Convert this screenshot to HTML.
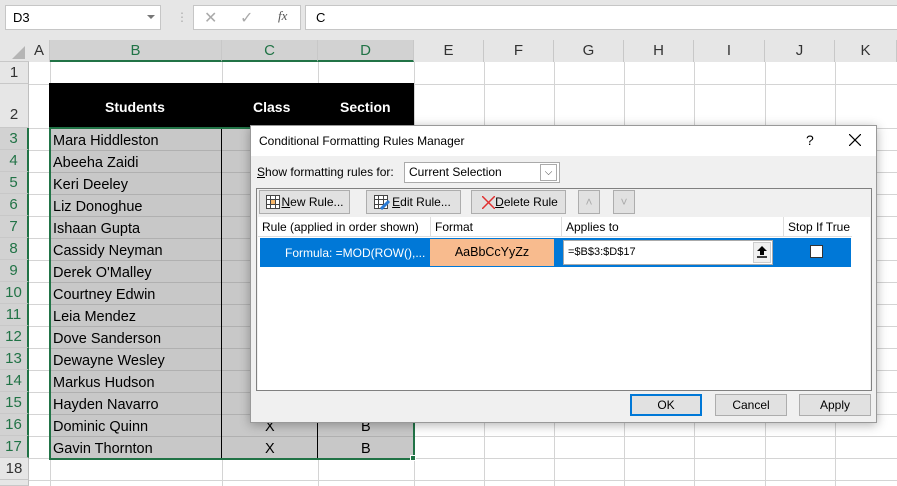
<!DOCTYPE html>
<html><head><style>
*{margin:0;padding:0;box-sizing:border-box}
body{width:897px;height:486px;overflow:hidden;background:#fff;font-family:"Liberation Sans",sans-serif;position:relative}
.a{position:absolute}
.hl{position:absolute;height:1px;background:#d4d4d4}
.vl{position:absolute;width:1px;background:#d4d4d4}
.rh{position:absolute;left:0;width:29px;text-align:center;font-size:15px;color:#333;background:#e6e6e6;border-bottom:1px solid #c8c8c8;border-right:1px solid #bfbfbf}
.rs{background:#d2d2d2;color:#217346;border-right:2px solid #217346}
.ch{position:absolute;top:40px;height:22px;text-align:center;font-size:15px;color:#333;line-height:22px;background:#e6e6e6;border-right:1px solid #c8c8c8}
.cs{background:#d2d2d2;color:#217346;border-bottom:2px solid #217346}
.nm{position:absolute;left:53px;font-size:14.5px;color:#000;line-height:22px;margin-top:2px}
.btn{position:absolute;background:#e1e1e1;border:1px solid #adadad;font-size:12px;color:#000;text-align:center}
</style></head><body>
<div class="a" style="left:0;top:0;width:897px;height:40px;background:#e6e6e6"></div>
<div class="a" style="left:5px;top:5px;width:156px;height:25px;background:#fff;border:1px solid #c6c6c6;font-size:13px;line-height:23px;padding-left:7px">D3</div>
<div class="a" style="left:147px;top:15px;width:0;height:0;border-left:4px solid transparent;border-right:4px solid transparent;border-top:4px solid #777"></div>
<div class="a" style="left:176px;top:10px;color:#aaa;font-size:12px">⋮</div>
<div class="a" style="left:193px;top:5px;width:108px;height:25px;background:#fff;border:1px solid #c6c6c6"></div>
<div class="a" style="left:204px;top:8px;color:#aaa;font-size:16px">✕</div>
<div class="a" style="left:240px;top:8px;color:#aaa;font-size:16px">✓</div>
<div class="a" style="left:278px;top:8px;color:#555;font-size:13px;font-style:italic;font-family:'Liberation Serif',serif">fx</div>
<div class="a" style="left:305px;top:5px;width:600px;height:25px;background:#fff;border:1px solid #c6c6c6;font-size:13px;line-height:23px;padding-left:10px">C</div>
<div class="a" style="left:0;top:40px;width:897px;height:22px;background:#e6e6e6;border-bottom:1px solid #c8c8c8"></div>
<div class="a" style="left:12px;top:46px;width:0;height:0;border-left:13px solid transparent;border-bottom:13px solid #b5b5b5"></div>
<div class="ch" style="left:29px;width:21px">A</div>
<div class="ch cs" style="left:50px;width:172px">B</div>
<div class="ch cs" style="left:222px;width:96px">C</div>
<div class="ch cs" style="left:318px;width:96px">D</div>
<div class="ch" style="left:414px;width:70px">E</div>
<div class="ch" style="left:484px;width:70px">F</div>
<div class="ch" style="left:554px;width:70px">G</div>
<div class="ch" style="left:624px;width:70px">H</div>
<div class="ch" style="left:694px;width:71px">I</div>
<div class="ch" style="left:765px;width:70px">J</div>
<div class="ch" style="left:835px;width:62px">K</div>
<div class="vl" style="left:50px;top:62px;height:424px"></div>
<div class="vl" style="left:222px;top:62px;height:424px"></div>
<div class="vl" style="left:318px;top:62px;height:424px"></div>
<div class="vl" style="left:414px;top:62px;height:424px"></div>
<div class="vl" style="left:484px;top:62px;height:424px"></div>
<div class="vl" style="left:554px;top:62px;height:424px"></div>
<div class="vl" style="left:624px;top:62px;height:424px"></div>
<div class="vl" style="left:694px;top:62px;height:424px"></div>
<div class="vl" style="left:765px;top:62px;height:424px"></div>
<div class="vl" style="left:835px;top:62px;height:424px"></div>
<div class="hl" style="left:29px;top:84px;width:868px"></div>
<div class="hl" style="left:29px;top:128px;width:868px"></div>
<div class="hl" style="left:29px;top:150px;width:868px"></div>
<div class="hl" style="left:29px;top:172px;width:868px"></div>
<div class="hl" style="left:29px;top:194px;width:868px"></div>
<div class="hl" style="left:29px;top:216px;width:868px"></div>
<div class="hl" style="left:29px;top:238px;width:868px"></div>
<div class="hl" style="left:29px;top:260px;width:868px"></div>
<div class="hl" style="left:29px;top:282px;width:868px"></div>
<div class="hl" style="left:29px;top:304px;width:868px"></div>
<div class="hl" style="left:29px;top:326px;width:868px"></div>
<div class="hl" style="left:29px;top:348px;width:868px"></div>
<div class="hl" style="left:29px;top:370px;width:868px"></div>
<div class="hl" style="left:29px;top:392px;width:868px"></div>
<div class="hl" style="left:29px;top:414px;width:868px"></div>
<div class="hl" style="left:29px;top:436px;width:868px"></div>
<div class="hl" style="left:29px;top:458px;width:868px"></div>
<div class="hl" style="left:29px;top:480px;width:868px"></div>
<div class="rh" style="top:62px;height:22px;line-height:22px">1</div>
<div class="rh" style="top:84px;height:44px;line-height:62px">2</div>
<div class="rh rs" style="top:128px;height:22px;line-height:22px">3</div>
<div class="rh rs" style="top:150px;height:22px;line-height:22px">4</div>
<div class="rh rs" style="top:172px;height:22px;line-height:22px">5</div>
<div class="rh rs" style="top:194px;height:22px;line-height:22px">6</div>
<div class="rh rs" style="top:216px;height:22px;line-height:22px">7</div>
<div class="rh rs" style="top:238px;height:22px;line-height:22px">8</div>
<div class="rh rs" style="top:260px;height:22px;line-height:22px">9</div>
<div class="rh rs" style="top:282px;height:22px;line-height:22px">10</div>
<div class="rh rs" style="top:304px;height:22px;line-height:22px">11</div>
<div class="rh rs" style="top:326px;height:22px;line-height:22px">12</div>
<div class="rh rs" style="top:348px;height:22px;line-height:22px">13</div>
<div class="rh rs" style="top:370px;height:22px;line-height:22px">14</div>
<div class="rh rs" style="top:392px;height:22px;line-height:22px">15</div>
<div class="rh rs" style="top:414px;height:22px;line-height:22px">16</div>
<div class="rh rs" style="top:436px;height:22px;line-height:22px">17</div>
<div class="rh" style="top:458px;height:22px;line-height:22px">18</div>
<div class="rh" style="top:480px;height:6px"></div>
<div class="a" style="left:49px;top:83px;width:365px;height:45px;background:#000;color:#fff;font-weight:bold;font-size:14px">
<span class="a" style="left:56px;top:16px">Students</span><span class="a" style="left:204px;top:16px">Class</span><span class="a" style="left:291px;top:16px">Section</span></div>
<div class="a" style="left:50px;top:128px;width:364px;height:330px;background:#c8c8c8"></div>
<div class="a" style="left:50px;top:150px;width:364px;height:1px;background:#b0b0b0;box-shadow:0 22px #b0b0b0,0 44px #b0b0b0,0 66px #b0b0b0,0 88px #b0b0b0,0 110px #b0b0b0,0 132px #b0b0b0,0 154px #b0b0b0,0 176px #b0b0b0,0 198px #b0b0b0,0 220px #b0b0b0,0 242px #b0b0b0,0 264px #b0b0b0,0 286px #b0b0b0"></div>
<div class="a" style="left:221px;top:128px;width:1px;height:330px;background:#000"></div>
<div class="a" style="left:317px;top:128px;width:1px;height:330px;background:#000"></div>
<div class="a" style="left:49px;top:127px;width:366px;height:333px;border:2px solid #217346"></div>
<div class="a" style="left:410px;top:455px;width:6px;height:6px;background:#217346;border:1px solid #fff"></div>
<div class="nm" style="top:128px">Mara Hiddleston</div>
<div class="nm" style="top:150px">Abeeha Zaidi</div>
<div class="nm" style="top:172px">Keri Deeley</div>
<div class="nm" style="top:194px">Liz Donoghue</div>
<div class="nm" style="top:216px">Ishaan Gupta</div>
<div class="nm" style="top:238px">Cassidy Neyman</div>
<div class="nm" style="top:260px">Derek O'Malley</div>
<div class="nm" style="top:282px">Courtney Edwin</div>
<div class="nm" style="top:304px">Leia Mendez</div>
<div class="nm" style="top:326px">Dove Sanderson</div>
<div class="nm" style="top:348px">Dewayne Wesley</div>
<div class="nm" style="top:370px">Markus Hudson</div>
<div class="nm" style="top:392px">Hayden Navarro</div>
<div class="nm" style="top:414px">Dominic Quinn</div>
<div class="nm" style="top:436px">Gavin Thornton</div>
<div class="nm" style="top:414px;left:265px">X</div><div class="nm" style="top:414px;left:361px">B</div>
<div class="nm" style="top:436px;left:265px">X</div><div class="nm" style="top:436px;left:361px">B</div>
<div class="a" style="left:250px;top:125px;width:627px;height:298px;background:#f0f0f0;border:1px solid #999;box-shadow:0 2px 10px rgba(0,0,0,.3)">
<div class="a" style="left:0;top:0;width:625px;height:30px;background:#fff"></div>
<div class="a" style="left:8px;top:8px;font-size:12px">Conditional Formatting Rules Manager</div>
<div class="a" style="left:555px;top:6px;font-size:14px">?</div>
<svg class="a" style="left:598px;top:8px" width="12" height="12"><path d="M0 0L12 12M12 0L0 12" stroke="#000" stroke-width="1.2"/></svg>
<div class="a" style="left:6px;top:39px;font-size:12px"><u>S</u>how formatting rules for:</div>
<div class="a" style="left:153px;top:36px;width:156px;height:21px;background:#fff;border:1px solid #aaa;font-size:12px;line-height:19px;padding-left:4px">Current Selection</div>
<div class="a" style="left:289px;top:38px;width:17px;height:17px;border:1px solid #aaa;font-size:10px;text-align:center;line-height:15px;color:#444">⌵</div>
<div class="a" style="left:5px;top:62px;width:616px;height:203px;border:1px solid #808080;background:#f0f0f0"></div>
<div class="btn" style="left:8px;top:64px;width:91px;height:24px;line-height:22px;padding-left:16px">
<svg class="a" style="left:6px;top:4px" width="14" height="14" viewBox="0 0 14 14"><rect x="0.5" y="0.5" width="13" height="13" fill="#fff" stroke="#444"/><rect x="4.5" y="4.5" width="5" height="5" fill="#f7b76a" stroke="#c55"/><path d="M0 4.5H14M0 9.5H14M4.5 0V14M9.5 0V14" stroke="#444"/></svg><u>N</u>ew Rule...</div>
<div class="btn" style="left:115px;top:64px;width:95px;height:24px;line-height:22px;padding-left:16px">
<svg class="a" style="left:7px;top:4px" width="16" height="15" viewBox="0 0 16 15"><rect x="0.5" y="0.5" width="13" height="13" fill="#fff" stroke="#444"/><path d="M0 4.5H14M0 9.5H14M4.5 0V14M9.5 0V14" stroke="#444"/><path d="M7 14L15 6" stroke="#2a7ad5" stroke-width="3"/></svg><u>E</u>dit Rule...</div>
<div class="btn" style="left:220px;top:64px;width:95px;height:24px;line-height:22px;padding-left:16px">
<svg class="a" style="left:10px;top:5px" width="13" height="13"><path d="M0 0L13 13M13 0L0 13" stroke="#e03030" stroke-width="1.5"/></svg><u>D</u>elete Rule</div>
<div class="btn" style="left:327px;top:64px;width:22px;height:24px;line-height:22px;color:#aaa">˄</div>
<div class="btn" style="left:362px;top:64px;width:22px;height:24px;line-height:22px;color:#aaa">˅</div>
<div class="a" style="left:7px;top:91px;width:612px;height:173px;background:#fff"></div>
<div class="a" style="left:7px;top:91px;width:594px;height:20px;border-bottom:1px solid #ddd;font-size:12px;line-height:20px">
<span class="a" style="left:4px">Rule (applied in order shown)</span><span class="a" style="left:172px;top:0;height:20px;border-left:1px solid #ddd;padding-left:4px">Format</span><span class="a" style="left:303px;top:0;height:20px;border-left:1px solid #ddd;padding-left:4px">Applies to</span><span class="a" style="left:525px;top:0;height:20px;border-left:1px solid #ddd;padding-left:4px">Stop If True</span></div>
<div class="a" style="left:9px;top:112px;width:591px;height:29px;background:#0078d7"></div>
<div class="a" style="left:34px;top:120px;color:#fff;font-size:12px">Formula: =MOD(ROW(),...</div>
<div class="a" style="left:179px;top:113px;width:124px;height:27px;background:#f8bb8e;font-size:12.5px;text-align:center;line-height:27px">AaBbCcYyZz</div>
<div class="a" style="left:312px;top:114px;width:210px;height:25px;background:#fff;border:1px solid #aaa;font-size:11px;line-height:23px;padding-left:4px">=$B$3:$D$17</div>
<div class="a" style="left:502px;top:116px;width:18px;height:21px;background:#f0f0f0;border:1px solid #ccc"></div>
<svg class="a" style="left:506px;top:120px" width="10" height="12"><path d="M5 0L10 5H7V9H3V5H0Z" fill="#000"/><path d="M0 11H10" stroke="#000" stroke-width="1.5"/></svg>
<div class="a" style="left:559px;top:119px;width:13px;height:13px;background:#fff;border:1px solid #333"></div>
<div class="btn" style="left:379px;top:268px;width:72px;height:22px;line-height:19px;border:2px solid #0078d7">OK</div>
<div class="btn" style="left:464px;top:268px;width:72px;height:22px;line-height:20px">Cancel</div>
<div class="btn" style="left:548px;top:268px;width:72px;height:22px;line-height:20px">Apply</div>
</div>
</body></html>
